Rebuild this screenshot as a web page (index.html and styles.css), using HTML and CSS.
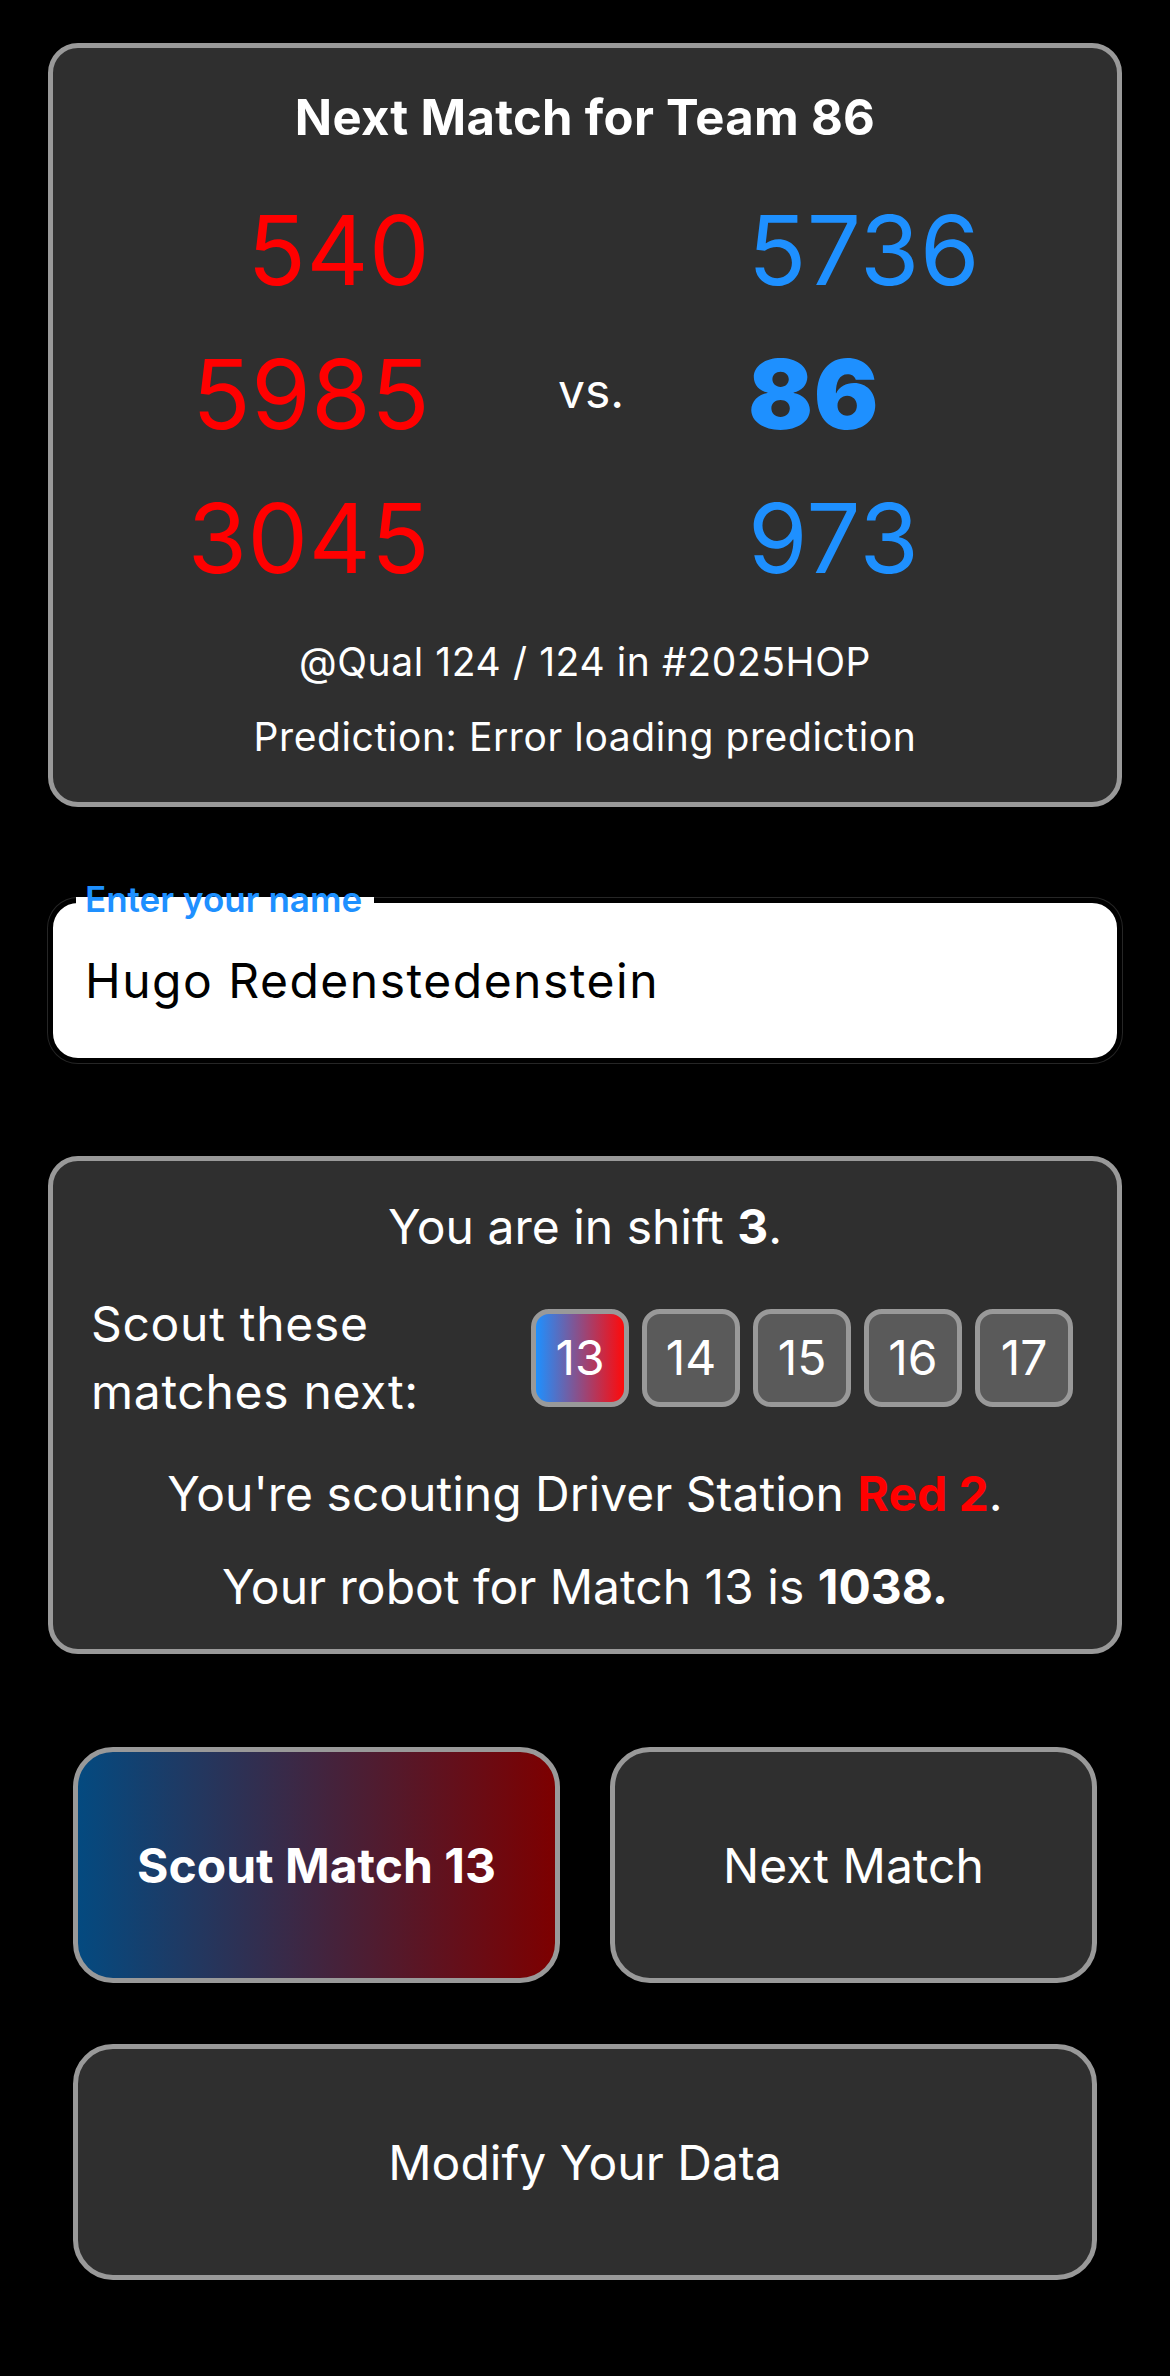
FILE: index.html
```html
<!DOCTYPE html>
<html lang="en">
<head>
<meta charset="utf-8">
<title>Scouting Home</title>
<link rel="stylesheet" href="styles.css">
</head>
<body>
<main class="page">
  <section class="card match-card">
    <h1 class="match-title">Next Match for Team 86</h1>
    <div class="teams">
      <div class="alliance red">
        <div>540</div>
        <div>5985</div>
        <div>3045</div>
      </div>
      <div class="vs">vs.</div>
      <div class="alliance blue">
        <div>5736</div>
        <div class="me">86</div>
        <div>973</div>
      </div>
    </div>
    <p class="meta">@Qual 124 / 124 in #2025HOP</p>
    <p class="meta">Prediction: Error loading prediction</p>
  </section>

  <div class="name-field">
    <span class="name-label">Enter your name</span>
    <div class="name-input" role="textbox">Hugo Redenstedenstein</div>
  </div>

  <section class="card shift-card">
    <p class="shift-line">You are in shift <b>3</b>.</p>
    <div class="next-row">
      <div class="next-label">Scout these<br>matches next:</div>
      <div class="match-chips">
        <span class="chip current">13</span>
        <span class="chip">14</span>
        <span class="chip">15</span>
        <span class="chip">16</span>
        <span class="chip">17</span>
      </div>
    </div>
    <p class="station-line">You're scouting Driver Station <b class="red-text">Red 2</b>.</p>
    <p class="robot-line">Your robot for Match 13 is <b>1038.</b></p>
  </section>

  <div class="actions">
    <button class="btn btn-scout">Scout Match 13</button>
    <button class="btn">Next Match</button>
    <button class="btn btn-wide">Modify Your Data</button>
  </div>
</main>
</body>
</html>
```

FILE: styles.css
```css
* { box-sizing: border-box; }

html, body {
  margin: 0;
  padding: 0;
  background: #000;
}

body {
  font-family: Inter, "Noto Sans", "Liberation Sans", sans-serif;
  color: #fff;
  width: 1170px;
  min-height: 2376px;
}

.page {
  padding: 43px 48px 0;
  display: flex;
  flex-direction: column;
}

.card {
  border: 5px solid #999;
  border-radius: 30px;
  background: #2f2f2f;
  text-align: center;
}

/* ---------- match card ---------- */
.match-card {
  height: 764px;
  padding: 40px 0 0;
}

.match-title {
  margin: 0;
  font-size: 49px;
  font-weight: 700;
  letter-spacing: 0.3px;
  line-height: 60px;
}

.teams {
  margin-top: 30px;
  padding-left: 8px;
  display: grid;
  grid-template-columns: 1fr 62px 1fr;
  column-gap: 128px;
  align-items: center;
}

.alliance {
  font-size: 96px;
  line-height: 144px;
  font-weight: 400;
  letter-spacing: 0.5px;
}

.alliance.red { color: #ff0000; text-align: right; }
.alliance.blue { color: #1e90ff; text-align: left; }
.alliance .me { font-weight: 900; }

.vs {
  font-size: 48px;
  line-height: 58px;
  padding-bottom: 6px;
  text-align: center;
}

.meta {
  margin: 0;
  font-size: 39px;
  letter-spacing: 0.6px;
  line-height: 75px;
}
.teams + .meta { margin-top: 14px; }

/* ---------- name field ---------- */
.name-field {
  position: relative;
  margin-top: 91px;
  height: 165px;
  border: 5px solid #000;
  border-radius: 30px;
  background: #fff;
  box-shadow: 0 0 0 1px #262626;
  display: flex;
  align-items: center;
  padding-left: 32px;
}

.name-label {
  position: absolute;
  left: 23px;
  top: -26px;
  padding: 0 12px 0 9px;
  font-size: 35px;
  font-weight: 600;
  line-height: 44px;
  color: #1e90ff;
  background: linear-gradient(to bottom, transparent 20px, #fff 20px);
}

.name-input {
  font-size: 48px;
  letter-spacing: 1.5px;
  color: #000;
  line-height: 58px;
}

/* ---------- shift card ---------- */
.shift-card {
  margin-top: 93px;
  height: 498px;
  padding-top: 36px;
  font-size: 48px;
}

.shift-card p {
  margin: 0;
  line-height: 60px;
}

.shift-card b { font-weight: 700; }
.red-text { color: #ff0000; }

.next-row {
  margin-top: 33px;
  padding: 0 44px 0 38px;
  display: flex;
  align-items: center;
  justify-content: space-between;
  text-align: left;
}

.next-label {
  line-height: 68px;
  letter-spacing: 0.7px;
}

.match-chips {
  display: flex;
  gap: 13px;
}

.chip {
  width: 98px;
  height: 98px;
  border: 5px solid #999;
  border-radius: 18px;
  background: #5a5a5a;
  display: flex;
  align-items: center;
  justify-content: center;
  font-size: 48px;
  line-height: 1;
}

.chip.current {
  background: linear-gradient(90deg, #1e90ff, #ff0a0a);
}

.station-line { margin-top: 38px !important; }
.robot-line { margin-top: 33px !important; }

/* ---------- actions ---------- */
.actions {
  margin: 93px 25px 0;
  display: grid;
  grid-template-columns: 1fr 1fr;
  column-gap: 50px;
  row-gap: 61px;
}

.btn {
  height: 236px;
  border: 5px solid #999;
  border-radius: 40px;
  background: #2f2f2f;
  color: #fff;
  font-family: inherit;
  font-size: 48px;
  font-weight: 400;
  padding: 0;
}

.btn-scout {
  font-weight: 700;
  background: linear-gradient(90deg, #044a80, #7d0000);
}

.btn-wide { grid-column: 1 / 3; }
```
